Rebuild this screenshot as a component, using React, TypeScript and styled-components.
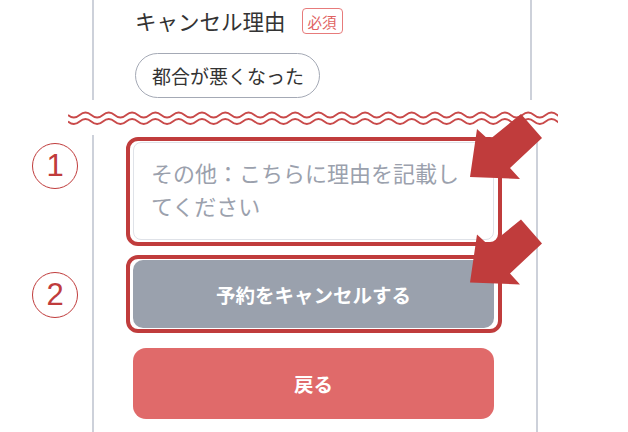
import React from "react";
import styled, { createGlobalStyle } from "styled-components";

const GlobalStyle = createGlobalStyle`
  html, body {
    margin: 0;
    padding: 0;
    background: #ffffff;
  }
  body {
    font-family: "Noto Sans CJK JP", "Noto Sans", sans-serif;
    color: #333333;
  }
`;

const RED = "#c03c3c";
const FRAME = "#cdd1da";

const Page = styled.div`
  position: relative;
  width: 628px;
  height: 432px;
  overflow: hidden;
  background: #ffffff;
`;

const TopFrame = styled.section`
  box-sizing: border-box;
  margin-left: 92px;
  width: 440px;
  height: 100px;
  border-left: 2px solid ${FRAME};
  border-right: 2px solid ${FRAME};
  padding: 8px 0 0 41px;
`;

const TitleRow = styled.div`
  display: flex;
  align-items: center;
  gap: 16px;
  height: 26px;
`;

const Title = styled.h2`
  margin: 0;
  font-size: 21.5px;
  font-weight: 400;
  color: #333333;
  line-height: 26px;
`;

const RequiredBadge = styled.span`
  box-sizing: border-box;
  display: inline-flex;
  align-items: center;
  justify-content: center;
  height: 26px;
  padding: 0 5px;
  border: 1.5px solid #e77b7b;
  border-radius: 4px;
  color: #e06262;
  font-size: 14.5px;
`;

const Chip = styled.button`
  box-sizing: border-box;
  margin-top: 19px;
  height: 45px;
  padding: 0 15px 0 16px;
  border: 1.5px solid #a4a9b5;
  border-radius: 23px;
  background: #ffffff;
  color: #333333;
  font-family: inherit;
  font-size: 19px;
`;

const WaveRow = styled.div`
  height: 35px;
  padding: 8px 0 0 68px;
  box-sizing: border-box;
`;

const Bottom = styled.div`
  display: flex;
`;

const AnnotationColumn = styled.div`
  width: 92px;
  display: flex;
  flex-direction: column;
  align-items: center;
  padding-top: 8px;
  padding-left: 18px;
  box-sizing: border-box;
`;

const StepMark = styled.div<{ $gap: number }>`
  box-sizing: border-box;
  width: 46px;
  height: 46px;
  margin-top: ${(p) => p.$gap}px;
  border: 1.6px solid ${RED};
  border-radius: 50%;
  display: flex;
  align-items: center;
  justify-content: center;
  color: ${RED};
  font-family: "Liberation Sans", "DejaVu Sans", sans-serif;
  font-size: 31px;
  font-weight: 400;
`;

const BottomFrame = styled.section`
  box-sizing: border-box;
  width: 446px;
  height: 297px;
  border-left: 2px solid ${FRAME};
  border-right: 2px solid ${FRAME};
  padding: 2px 0 0 32px;
`;

const Highlight = styled.div<{ $mt: number; $pb: number }>`
  box-sizing: border-box;
  width: 376px;
  margin-top: ${(p) => p.$mt}px;
  border: 4px solid ${RED};
  border-radius: 12px;
  padding: 1px 4px ${(p) => p.$pb}px 3px;
`;

const ReasonInput = styled.textarea`
  box-sizing: border-box;
  display: block;
  width: 361px;
  height: 98px;
  margin: 0;
  padding: 13px 17px;
  border: 1.5px solid #dfe2e8;
  border-radius: 8px;
  resize: none;
  font-family: inherit;
  font-size: 22px;
  line-height: 33px;
  color: #333333;
  background: #ffffff;
  outline: none;

  &::placeholder {
    color: #9ba1ad;
  }
`;

const ActionButton = styled.button<{ $tone: "muted" | "danger" }>`
  box-sizing: border-box;
  display: flex;
  align-items: center;
  justify-content: center;
  width: 361px;
  height: ${(p) => (p.$tone === "muted" ? 68 : 71)}px;
  border: none;
  border-radius: ${(p) => (p.$tone === "muted" ? 10 : 13)}px;
  background: ${(p) => (p.$tone === "muted" ? "#9aa1ad" : "#e06a6a")};
  color: #ffffff;
  font-family: inherit;
  font-size: 19.5px;
  font-weight: 700;
  cursor: pointer;
`;

const BackButton = styled(ActionButton)`
  margin: 15px 0 0 7px;
`;

const Overlay = styled.svg`
  position: absolute;
  left: 0;
  top: 0;
  pointer-events: none;
`;

const wavePath = (y: number, width: number) => {
  const p = 23.3;
  let d = `M0 ${y} q ${p / 4} 5 ${p / 2} 0`;
  for (let x = p / 2; x < width; x += p / 2) d += ` t ${p / 2} 0`;
  return d;
};

const Wave = () => (
  <svg width="490" height="20" viewBox="0 0 490 20">
    <path d={wavePath(7, 490)} fill="none" stroke="#c94a4a" strokeWidth="1.8" />
    <path d={wavePath(13.5, 490)} fill="none" stroke="#c94a4a" strokeWidth="1.8" />
  </svg>
);

const arrowPoints = (dy: number) =>
  [
    [470, 177],
    [477, 129],
    [489, 140],
    [521, 114],
    [542, 138],
    [510, 168],
    [520, 179],
  ]
    .map(([x, y]) => `${x},${y + dy}`)
    .join(" ");

const Arrows = () => (
  <Overlay width="628" height="432" viewBox="0 0 628 432">
    <polygon points={arrowPoints(0)} fill={RED} />
    <polygon points={arrowPoints(105.5)} fill={RED} />
  </Overlay>
);

export default function App() {
  return (
    <Page>
      <GlobalStyle />
      <TopFrame>
        <TitleRow>
          <Title>キャンセル理由</Title>
          <RequiredBadge>必須</RequiredBadge>
        </TitleRow>
        <Chip>都合が悪くなった</Chip>
      </TopFrame>

      <WaveRow>
        <Wave />
      </WaveRow>

      <Bottom>
        <AnnotationColumn>
          <StepMark $gap={0}>1</StepMark>
          <StepMark $gap={83}>2</StepMark>
        </AnnotationColumn>
        <BottomFrame>
          <Highlight $mt={0} $pb={2}>
            <ReasonInput placeholder="その他：こちらに理由を記載してください" />
          </Highlight>
          <Highlight $mt={9} $pb={1}>
            <ActionButton $tone="muted">予約をキャンセルする</ActionButton>
          </Highlight>
          <BackButton $tone="danger">戻る</BackButton>
        </BottomFrame>
      </Bottom>

      <Arrows />
    </Page>
  );
}
